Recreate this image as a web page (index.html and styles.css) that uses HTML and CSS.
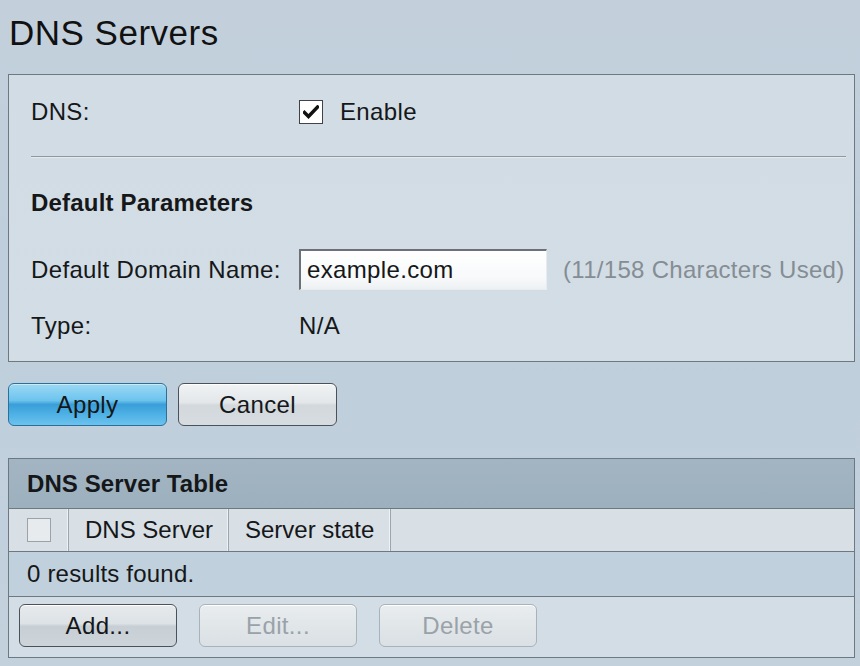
FILE: index.html
```html
<!DOCTYPE html>
<html>
<head>
<meta charset="utf-8">
<link rel="stylesheet" href="styles.css">
</head>
<body>
<h1 class="title">DNS Servers</h1>

<div class="panel">
  <div class="row row-dns">
    <span class="label">DNS:</span>
    <span class="checkbox checked">
      <svg width="16" height="14" viewBox="0 0 16 14"><path d="M1.5 7.5 L5.5 11.5 L14.5 2" fill="none" stroke="#111" stroke-width="3.4" stroke-linecap="square" stroke-linejoin="miter"/></svg>
    </span>
    <span class="enable">Enable</span>
  </div>
  <div class="sep"></div>
  <div class="row row-head"><span class="bold">Default Parameters</span></div>
  <div class="row row-domain">
    <span class="label">Default Domain Name:</span>
    <span class="input">example.com</span>
    <span class="hint">(11/158 Characters Used)</span>
  </div>
  <div class="row row-type">
    <span class="label">Type:</span>
    <span>N/A</span>
  </div>
</div>

<div class="actions">
  <button class="btn btn-primary">Apply</button>
  <button class="btn">Cancel</button>
</div>

<div class="table-panel">
  <div class="table-title">DNS Server Table</div>
  <div class="cols">
    <div class="col col-check"><span class="checkbox empty"></span></div>
    <div class="col col-server">DNS Server</div>
    <div class="col col-state">Server state</div>
    <div class="col col-fill"></div>
  </div>
  <div class="results">0 results found.</div>
  <div class="table-actions">
    <button class="btn btn-sm">Add...</button>
    <button class="btn btn-sm btn-disabled">Edit...</button>
    <button class="btn btn-sm btn-disabled">Delete</button>
  </div>
</div>
</body>
</html>
```

FILE: styles.css
```css
html, body {
  margin: 0;
  padding: 0;
}
body {
  width: 860px;
  height: 666px;
  overflow: hidden;
  padding: 0 5px 0 8px;
  box-sizing: border-box;
  background: linear-gradient(180deg, #c3d0dc 0%, #bfcedc 40%, #c3d1dd 100%);
  font-family: "Liberation Sans", Arial, sans-serif;
  font-size: 24px;
  letter-spacing: 0.35px;
  color: #151719;
  white-space: nowrap;
}
.title {
  margin: 0;
  height: 74px;
  box-sizing: border-box;
  padding: 13px 0 0 1px;
  font-size: 35px;
  font-weight: normal;
  line-height: 40px;
  letter-spacing: 0.5px;
  color: #111;
}
.panel {
  border: 1px solid #6d7881;
  background: linear-gradient(180deg, #d2dce4 0%, #d3dde5 100%);
  height: 288px;
  box-sizing: border-box;
  padding: 17px 8px 0 22px;
}
.row {
  display: flex;
  align-items: center;
  height: 40px;
}
.label {
  width: 268px;
  flex: none;
}
.checkbox {
  width: 24px;
  height: 24px;
  box-sizing: border-box;
  border: 1px solid #3d4348;
  background: #fff;
  display: inline-flex;
  align-items: center;
  justify-content: center;
}
.enable {
  margin-left: 17px;
}
.sep {
  height: 0;
  border-top: 1px solid #8d989f;
  border-bottom: 1px solid #e4eaee;
  margin: 24px 0 25px;
}
.bold {
  font-weight: bold;
  letter-spacing: 0.2px;
}
.row-domain {
  margin-top: 26px;
  height: 41px;
}
.input {
  width: 248px;
  height: 41px;
  box-sizing: border-box;
  border-top: 2px solid #6b7176;
  border-left: 2px solid #6b7176;
  border-right: 1px solid #e8ecef;
  border-bottom: 1px solid #e8ecef;
  background: linear-gradient(180deg, #ffffff 0%, #f7f9fa 70%, #eef1f3 100%);
  padding-left: 6px;
  display: flex;
  align-items: center;
  flex: none;
}
.hint {
  margin-left: 16px;
  color: #858d94;
  letter-spacing: 0.3px;
}
.row-type {
  margin-top: 16px;
}
.actions {
  display: flex;
  gap: 11px;
  margin-top: 21px;
}
.btn {
  font-family: "Liberation Sans", Arial, sans-serif;
  font-size: 24px;
  letter-spacing: 0.35px;
  color: #151719;
  width: 159px;
  height: 43px;
  border: 1px solid #4b5257;
  border-radius: 6px;
  background: linear-gradient(180deg, #f1f3f4 0%, #e3e7ea 45%, #d2d8dc 52%, #d7dce0 100%);
  padding: 0;
  margin: 0;
  box-shadow: inset 0 1px 0 #ffffff;
}
.btn-primary {
  border-color: #2c6f98;
  background: linear-gradient(180deg, #9bd8f4 0%, #6dc4ee 40%, #3a9fd8 50%, #4fb2e6 75%, #6cc2ee 100%);
  box-shadow: inset 0 1px 0 #c9ecfb;
}
.table-panel {
  margin-top: 32px;
  border: 1px solid #6d7881;
  height: 200px;
  box-sizing: border-box;
  background: #d3dde5;
}
.table-title {
  height: 50px;
  box-sizing: border-box;
  border-bottom: 1px solid #6d7881;
  background: linear-gradient(180deg, #a3b5c3 0%, #9db0be 100%);
  font-weight: bold;
  letter-spacing: 0.1px;
  padding-left: 18px;
  display: flex;
  align-items: center;
}
.cols {
  display: flex;
  height: 42px;
  border-bottom: 1px solid #6d7881;
  background: #d8dfe5;
  letter-spacing: 0;
}
.col {
  display: flex;
  align-items: center;
  box-sizing: border-box;
  border-right: 1px solid #9ba6ae;
  box-shadow: inset -1px 0 0 #eef2f5;
  padding-left: 16px;
}
.col-check {
  width: 60px;
  padding-left: 18px;
}
.checkbox.empty {
  border-color: #9aa3aa;
  background: #e7ebee;
}
.col-server {
  width: 160px;
}
.col-state {
  width: 162px;
}
.col-fill {
  flex: 1;
  border-right: none;
  box-shadow: none;
}
.results {
  height: 45px;
  box-sizing: border-box;
  border-bottom: 1px solid #6d7881;
  background: #c0d0dc;
  display: flex;
  align-items: center;
  padding-left: 18px;
  letter-spacing: 0.2px;
}
.table-actions {
  display: flex;
  gap: 22px;
  padding: 7px 0 0 10px;
}
.btn-sm {
  width: 158px;
  height: 43px;
  background: linear-gradient(180deg, #e6eaed 0%, #dde2e6 45%, #c7cfd5 52%, #cdd4da 100%);
}
.btn-disabled {
  border-color: #a8b2b9;
  color: #9aa2a9;
  background: linear-gradient(180deg, #e9edf0 0%, #e1e6e9 50%, #dae0e4 100%);
}
```
